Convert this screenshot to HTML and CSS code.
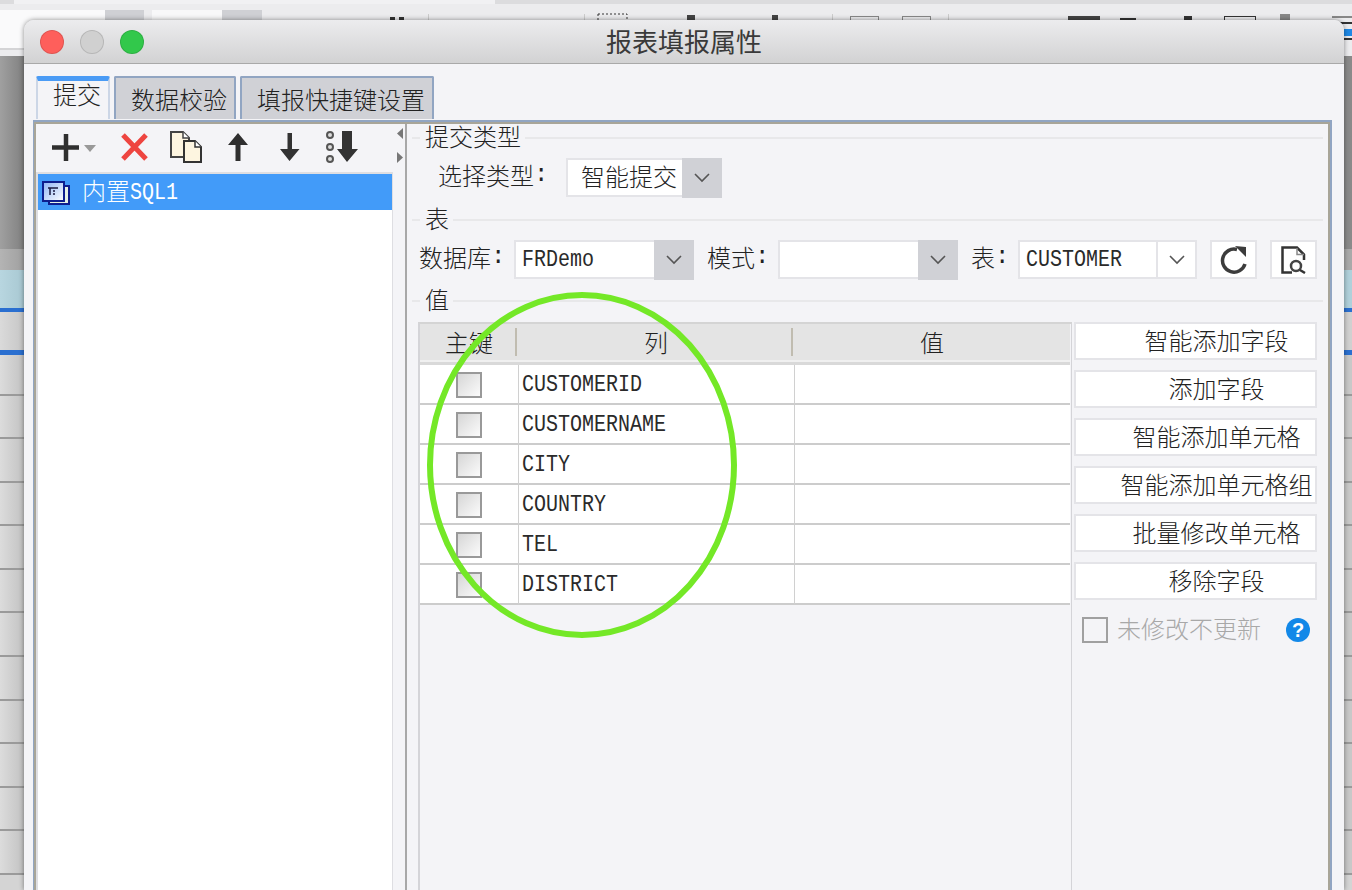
FILE: index.html
```html
<!DOCTYPE html>
<html lang="zh">
<head>
<meta charset="utf-8">
<title>报表填报属性</title>
<link rel="stylesheet" href="styles.css">
</head>
<body>
<div class="backdrop">
  <svg class="peek" width="1352" height="56" viewBox="0 0 1352 56">
    <rect width="1352" height="56" fill="#ececee"/>
    <rect width="1352" height="4" fill="#dcdcde"/>
    <rect x="14" width="481" height="4" fill="#f1f1f3"/>
    <rect y="10" width="105" height="38" fill="#fafafb"/>
    <rect x="105" y="10" width="39" height="38" fill="#cfd0d4"/>
    <rect x="152" y="10" width="70" height="38" fill="#f8f8f9"/>
    <rect x="222" y="10" width="40" height="38" fill="#cfd0d4"/>
    <rect y="48" width="24" height="2" fill="#d4d4d6"/>
    <rect x="390" y="17" width="5" height="3" fill="#333"/>
    <rect x="399" y="17" width="5" height="3" fill="#333"/>
    <rect x="428" y="14" width="1" height="6" fill="#ccc"/>
    <rect x="584" y="14" width="1" height="6" fill="#ccc"/>
    <rect x="598" y="14" width="29" height="8" fill="none" stroke="#333" stroke-dasharray="2 2"/>
    <rect x="687" y="15" width="8" height="5" fill="#444"/>
    <rect x="772" y="15" width="6" height="5" fill="#444"/>
    <rect x="832" y="14" width="1" height="6" fill="#ccc"/>
    <rect x="850.5" y="16.5" width="28" height="6" fill="none" stroke="#888"/>
    <rect x="902.5" y="16.5" width="28" height="6" fill="none" stroke="#888"/>
    <rect x="948" y="14" width="1" height="6" fill="#ccc"/>
    <rect x="1068" y="16" width="32" height="4" fill="#444"/>
    <rect x="1120" y="18" width="16" height="2" fill="#333"/>
    <rect x="1184" y="16" width="8" height="4" fill="#333"/>
    <rect x="1224.5" y="16.5" width="31" height="6" fill="none" stroke="#333"/>
    <rect x="1280" y="14" width="10" height="6" fill="#888"/>
    <rect x="1332" y="16" width="20" height="2" fill="#888"/>
    <rect x="1332" y="22" width="20" height="2" fill="#333"/>
    <rect x="1336" y="29" width="16" height="7" fill="#1e88e5"/>
    <rect x="1332" y="38" width="20" height="2" fill="#333"/>
  </svg>
  <div class="band band-dark"></div>
  <div class="band band-mid"></div>
  <div class="band band-blue"></div>
  <div class="band band-light"></div>
  <div class="cell-row cell-row-first"></div><div class="cell-row"></div><div class="cell-row"></div>
  <div class="cell-row"></div><div class="cell-row"></div><div class="cell-row"></div>
  <div class="cell-row"></div><div class="cell-row"></div><div class="cell-row"></div>
  <div class="cell-row"></div><div class="cell-row"></div><div class="cell-row"></div>
</div>

<div class="dialog">
  <header class="titlebar">
    <div class="lights">
      <span class="light light-red"></span>
      <span class="light light-gray"></span>
      <span class="light light-green"></span>
    </div>
    <div class="title">报表填报属性</div>
    <div></div>
  </header>

  <nav class="tabs">
    <div class="tab tab-active">提交</div>
    <div class="tab">数据校验</div>
    <div class="tab">填报快捷键设置</div>
  </nav>

  <div class="pane">
    <div class="pane-inner">
      <aside class="left">
        <div class="toolbar">
          <svg width="48" height="36" viewBox="0 0 48 36"><path d="M2 17.5H29M16 4V31" stroke="#2f2f2f" stroke-width="4.5" fill="none"/><path d="M34 15H46L40 22Z" fill="#999"/></svg>
          <svg width="28" height="36" viewBox="0 0 28 36"><path d="M3 5L26 29M26 5L3 29" stroke="#ee4540" stroke-width="5" fill="none"/></svg>
          <svg width="32" height="36" viewBox="0 0 32 36"><path d="M1 2H13L19 8V27H1Z" fill="#fdf5e0" stroke="#444" stroke-width="2"/><path d="M13 2V8H19" fill="#fff" stroke="#444" stroke-width="1.5"/><path d="M14 11H25L31 17V32H14Z" fill="#fdf5e0" stroke="#333" stroke-width="2"/><path d="M25 11V17H31" fill="#fff" stroke="#333" stroke-width="1.5"/></svg>
          <svg width="24" height="36" viewBox="0 0 24 36"><path d="M12 3L22 15H14.500V31H9.500V15H2Z" fill="#2f2f2f"/></svg>
          <svg width="24" height="36" viewBox="0 0 24 36"><path d="M9.500 3H14V19H21.500L11.500 31L2 19H9.500Z" fill="#333"/></svg>
          <svg width="36" height="36" viewBox="0 0 36 36"><circle cx="4" cy="5" r="3" fill="#ddd" stroke="#555" stroke-width="2"/><circle cx="4" cy="17" r="3" fill="#ddd" stroke="#555" stroke-width="2"/><circle cx="4" cy="29" r="3" fill="#ddd" stroke="#555" stroke-width="2"/><path d="M16 1H26V19H32L21 32L11 19H16Z" fill="#333"/></svg>
        </div>
        <div class="list">
          <div class="list-item">
            <svg width="28" height="24" viewBox="0 0 28 24">
              <defs><linearGradient id="winfill" x1="0" y1="0" x2="1" y2="1"><stop offset="0" stop-color="#8fb4f5"/><stop offset="1" stop-color="#ffffff"/></linearGradient></defs>
              <rect x="7" y="5" width="20" height="18" fill="#e6f2e6" stroke="#0e1e8e" stroke-width="2"/>
              <rect x="1" y="1" width="21" height="19" fill="url(#winfill)" stroke="#0e1e8e" stroke-width="2"/>
              <path d="M6 7H16M8 7V14M11 10H13M11 13H13" stroke="#1a1a40" stroke-width="1.500" fill="none"/>
            </svg>
            <span class="list-label">内置<span class="latin">SQL1</span></span>
          </div>
        </div>
      </aside>

      <div class="splitter">
        <svg width="6" height="36" viewBox="0 0 6 36"><path d="M6 0V11L0 5.500Z" fill="#777"/><path d="M0 24V35L6 29.500Z" fill="#777"/></svg>
      </div>

      <main class="right">
        <div class="legend legend-first"><span class="legend-text">提交类型</span></div>
        <div class="form-row form-row-type">
          <label class="lbl lbl-type">选择类型<span class="colon">:</span></label>
          <div class="combo combo-type">
            <div class="combo-field combo-field-type">智能提交</div>
            <div class="combo-arrow"><svg width="16" height="10" viewBox="0 0 16 10"><path d="M1 1L8 8L15 1" stroke="#555" stroke-width="1.600" fill="none"/></svg></div>
          </div>
        </div>

        <div class="legend"><span class="legend-text">表</span></div>
        <div class="form-row form-row-table">
          <label class="lbl lbl-db">数据库<span class="colon">:</span></label>
          <div class="combo combo-wide">
            <div class="combo-field"><span class="latin">FRDemo</span></div>
            <div class="combo-arrow"><svg width="16" height="10" viewBox="0 0 16 10"><path d="M1 1L8 8L15 1" stroke="#555" stroke-width="1.600" fill="none"/></svg></div>
          </div>
          <label class="lbl lbl-mode">模式<span class="colon">:</span></label>
          <div class="combo combo-wide">
            <div class="combo-field"></div>
            <div class="combo-arrow"><svg width="16" height="10" viewBox="0 0 16 10"><path d="M1 1L8 8L15 1" stroke="#555" stroke-width="1.600" fill="none"/></svg></div>
          </div>
          <label class="lbl lbl-tbl">表<span class="colon">:</span></label>
          <div class="combo combo-plain">
            <div class="combo-field"><span class="latin">CUSTOMER</span></div>
            <div class="combo-arrow"><svg width="16" height="10" viewBox="0 0 16 10"><path d="M1 1L8 8L15 1" stroke="#555" stroke-width="1.600" fill="none"/></svg></div>
          </div>
          <div class="icon-btn">
            <svg width="28" height="28" viewBox="0 0 28 28"><path d="M25 18A11.500 11.500 0 1 1 17 3.500" stroke="#3c3c3c" stroke-width="3.500" fill="none"/><path d="M15 0L26 1V11Z" fill="#3c3c3c"/></svg>
          </div>
          <div class="icon-btn">
            <svg width="26" height="28" viewBox="0 0 26 28"><path d="M11 26.500H1.500V1.500H16L23 8.500V14" stroke="#333" stroke-width="2.500" fill="none"/><path d="M16 2V8.500H23" stroke="#888" stroke-width="1.500" fill="none"/><circle cx="15" cy="20" r="5" stroke="#444" stroke-width="2.500" fill="none"/><path d="M19 24L24 27" stroke="#333" stroke-width="2.500"/></svg>
          </div>
        </div>

        <div class="legend legend-values"><span class="legend-text">值</span></div>
        <div class="values">
          <div class="table-area">
            <div class="table">
              <div class="th th-grip-cell"><span class="th-label">主键</span><span class="th-grip"></span></div>
              <div class="th th-grip-cell"><span class="th-label">列</span><span class="th-grip"></span></div>
              <div class="th"><span class="th-label">值</span></div>
              <div class="td td-check"><span class="check"></span></div><div class="td td-col"><span class="latin">CUSTOMERID</span></div><div class="td td-col"></div>
              <div class="td td-check"><span class="check"></span></div><div class="td td-col"><span class="latin">CUSTOMERNAME</span></div><div class="td td-col"></div>
              <div class="td td-check"><span class="check"></span></div><div class="td td-col"><span class="latin">CITY</span></div><div class="td td-col"></div>
              <div class="td td-check"><span class="check"></span></div><div class="td td-col"><span class="latin">COUNTRY</span></div><div class="td td-col"></div>
              <div class="td td-check"><span class="check"></span></div><div class="td td-col"><span class="latin">TEL</span></div><div class="td td-col"></div>
              <div class="td td-check"><span class="check"></span></div><div class="td td-col"><span class="latin">DISTRICT</span></div><div class="td td-col"></div>
            </div>
          </div>
          <div class="actions">
            <div class="btn">智能添加字段</div>
            <div class="btn">添加字段</div>
            <div class="btn">智能添加单元格</div>
            <div class="btn">智能添加单元格组</div>
            <div class="btn">批量修改单元格</div>
            <div class="btn">移除字段</div>
            <div class="option">
              <span class="option-box"></span>
              <span class="option-text">未修改不更新</span>
              <span class="help">?</span>
            </div>
          </div>
        </div>
      </main>
    </div>
  </div>
</div>

<svg class="ring" width="316" height="352" viewBox="0 0 316 352"><ellipse cx="158" cy="176" rx="152" ry="170" fill="none" stroke="#74e827" stroke-width="6"/></svg>
</body>
</html>
```
FILE: styles.css
```css
* { box-sizing: border-box; }
html, body { margin: 0; height: 100%; }
body {
  width: 1352px;
  height: 890px;
  position: relative;
  overflow: hidden;
  font-family: "Noto Sans CJK SC", "Liberation Sans", sans-serif;
  font-weight: 300;
  font-size: 24px;
  line-height: 1;
  color: #222;
  background: #d4d4d4;
}

/* application behind the dialog */
.backdrop { display: flex; flex-direction: column; height: 890px; overflow: hidden; }
.peek { display: block; flex: none; }
.band { flex: none; }
.band-dark { height: 193px; background: linear-gradient(90deg, #a0a0a0, #808080 24px, #8a8a8a); }
.band-mid { height: 21px; background: linear-gradient(90deg, #b4b4b4, #a0a0a0 24px, #a9a9a9); }
.band-blue { height: 42px; background: linear-gradient(90deg, #b8d6e0, #a8c8d2 24px, #b0d0da); border-bottom: 4px solid #2a6fd0; }
.band-light { height: 43px; background: linear-gradient(90deg, #dadada, #c6c6c6 24px, #d0d0d0); border-bottom: 5px solid #2a6fd0; }
.cell-row { flex: none; height: 43.6px; background: linear-gradient(90deg, #dcdcdc, #c2c2c2 24px, #c8c8c8); border-bottom: 2px solid #9a9a9a; }
.cell-row-first { height: 40.5px; }

/* dialog window */
.dialog {
  position: absolute;
  left: 24px;
  top: 20px;
  width: 1320px;
  height: 870px;
  display: flex;
  flex-direction: column;
  background: #f4f4f7;
  border-radius: 10px 10px 0 0;
  box-shadow: 0 0 5px rgba(0, 0, 0, .45);
  overflow: hidden;
}
.titlebar {
  flex: none;
  height: 44px;
  display: grid;
  grid-template-columns: 1fr auto 1fr;
  align-items: center;
  background: linear-gradient(#ececee, #d2d2d3);
  border-bottom: 1px solid #a9a9a9;
}
.lights { display: flex; gap: 16px; padding-left: 16px; }
.light { width: 24px; height: 24px; border-radius: 50%; border: 1px solid rgba(0, 0, 0, .12); }
.light-red { background: #fe5f5b; }
.light-gray { background: #d0d0d0; }
.light-green { background: #32c84b; }
.title { font-size: 26px; font-weight: 400; color: #3a3a3a; padding-bottom: 2px; }

/* tabs */
.tabs { flex: none; display: flex; gap: 4px; padding: 12px 0 0 12px; }
.tab {
  height: 43px;
  padding: 0 7px 0 15px;
  display: flex;
  align-items: center;
  background: #d0d1d6;
  border: 2px solid #91a5c2;
  border-bottom: 0;
  border-radius: 2px 2px 0 0;
}
.tab-active {
  padding: 0 7px 12px 15px;
  background: #f4f4f7;
  border-color: #ccd6e6;
  border-top: 5px solid #4a9bf5;
}

/* tab pane */
.pane {
  flex: 1;
  min-height: 0;
  margin: 1px 12px 0 9px;
  border: 2px solid #91a5c2;
  border-left-width: 1px;
  border-bottom: 0;
}
.pane-inner {
  height: 100%;
  display: flex;
  border: 2px solid #a8a598;
  border-bottom: 0;
}

/* left column */
.left { flex: none; width: 357px; display: flex; flex-direction: column; }
.toolbar {
  flex: none;
  height: 48px;
  padding-left: 14px;
  display: grid;
  grid-template-columns: 70px 50px 56px 52px 48px 36px;
  align-items: center;
}
.list {
  flex: 1;
  background: #fff;
  border: 2px solid #dedee2;
  border-width: 2px 1px 0 2px;
}
.list-item {
  height: 36px;
  display: flex;
  align-items: center;
  gap: 12px;
  padding: 2px 0 0 4px;
  background: #429bf9;
  color: #fff;
}
.list-label { display: flex; align-items: center; margin-top: -7px; }
.list-label .latin { margin-top: 6px; }

.splitter { flex: none; width: 12px; padding: 4px 0 0 4px; }
.splitter svg { display: block; }

/* right column */
.right {
  flex: 1;
  min-width: 0;
  display: flex;
  flex-direction: column;
  padding-right: 5px;
  border-left: 2px solid #a8a8a8;
}
.legend { flex: none; height: 28px; margin-top: 8px; display: flex; align-items: center; padding-left: 5px; }
.legend-first { margin-top: 0; }
.legend-values { margin-top: 7px; }
.legend::before { content: ""; width: 8px; height: 2px; background: #e8e8ea; }
.legend::after { content: ""; flex: 1; height: 2px; margin-left: 4px; background: #e8e8ea; }
.legend-text { margin: -4px 0 0 5px; }

.form-row { flex: none; display: flex; height: 40px; margin-top: 6px; align-items: flex-start; }
.form-row-type { padding-left: 31px; }
.form-row-table { padding-left: 12px; }
.lbl { flex: none; height: 38px; padding-bottom: 4px; display: flex; align-items: center; }
.lbl-type { width: 128px; }
.lbl-db { width: 95px; }
.lbl-mode { width: 71px; margin-left: 13px; }
.lbl-tbl { width: 47px; margin-left: 13px; }
.colon { font-family: "Liberation Mono", monospace; font-weight: 400; }

.combo { flex: none; display: flex; height: 40px; }
.combo-type { width: 156px; }
.combo-wide { width: 180px; }
.combo-plain { width: 179px; height: 39px; }
.combo-field {
  flex: 1;
  height: 39px;
  display: flex;
  align-items: center;
  padding-left: 6px;
  background: #fff;
  border: 2px solid #e4e4e8;
  border-right: 0;
}
.combo-field-type { padding: 0 0 4px 13px; }
.combo-arrow { flex: none; width: 40px; height: 40px; display: flex; align-items: center; justify-content: center; background: #d0d1d6; }
.combo-plain .combo-field { border-right: 2px solid #e4e4e8; }
.combo-plain .combo-arrow { width: 39px; height: 39px; background: #fff; border: 2px solid #e4e4e8; border-left: 0; }

.icon-btn {
  flex: none;
  width: 47px;
  height: 39px;
  margin-left: 13px;
  display: flex;
  align-items: center;
  justify-content: center;
  background: #fff;
  border: 2px solid #e4e4e8;
}

/* the narrow, tall Latin letters of the original font */
.latin {
  display: inline-block;
  font-family: "Liberation Mono", monospace;
  font-weight: 400;
  font-size: 24px;
  color: #2a2a2a;
  transform: scaleX(.8333);
  transform-origin: left center;
}
.list-item .latin { color: #fff; }
.td .latin { margin-top: 2px; }

/* values section */
.values { flex: 1; min-height: 0; display: flex; margin-top: 7px; padding-left: 11px; }
.table-area {
  flex: none;
  width: 654px;
  border-left: 2px solid #d4d4d8;
  border-right: 1px solid #d4d4d8;
  border-top: 2px solid #d4d4d4;
}
.table { display: grid; width: 650px; grid-template-columns: 98px 276px 276px; border-right: 2px solid #d4d4d4; }
.th {
  height: 41px;
  display: flex;
  align-items: center;
  padding-bottom: 3px;
  background: #e4e4e4;
  border-bottom: 3px solid #d9d9d9;
  box-shadow: inset 0 -2px 0 #f0f0f0;
}
.th-grip-cell { padding-left: 3px; }
.th-label { flex: 1; text-align: center; }
.th-grip { flex: none; width: 2px; height: 28px; margin-right: 1px; background: #c0bcb0; }
.td { height: 40px; background: #fff; border-bottom: 2px solid #ccc; display: flex; align-items: center; }
.td-check { justify-content: center; }
.td-col { border-left: 1px solid #d0d0d0; padding-left: 3px; }
.check {
  width: 26px;
  height: 26px;
  margin-top: 2px;
  border: 2px solid #999;
  background: linear-gradient(135deg, #d6d6d6, #fbfbfb);
}

.actions { flex: none; width: 243px; margin-left: 2px; display: flex; flex-direction: column; gap: 10px; }
.btn {
  height: 38px;
  padding: 0 0 2px 42px;
  display: flex;
  align-items: center;
  justify-content: center;
  background: #fff;
  border: 2px solid #e4e4e8;
}
.option { display: flex; align-items: center; margin-top: 7px; padding-left: 8px; color: #a8a8a8; }
.option-box { width: 26px; height: 26px; border: 2px solid #a0a0a0; background: #f4f4f7; }
.option-text { margin: -4px 0 0 9px; }
.help {
  width: 24px;
  height: 24px;
  margin-left: 25px;
  display: flex;
  align-items: center;
  justify-content: center;
  border-radius: 50%;
  background: #1288e8;
  color: #fff;
  font-family: "Liberation Sans", sans-serif;
  font-weight: 700;
  font-size: 20px;
}

/* annotation drawn over the screenshot */
.ring { position: absolute; left: 424px; top: 289px; pointer-events: none; }
```
